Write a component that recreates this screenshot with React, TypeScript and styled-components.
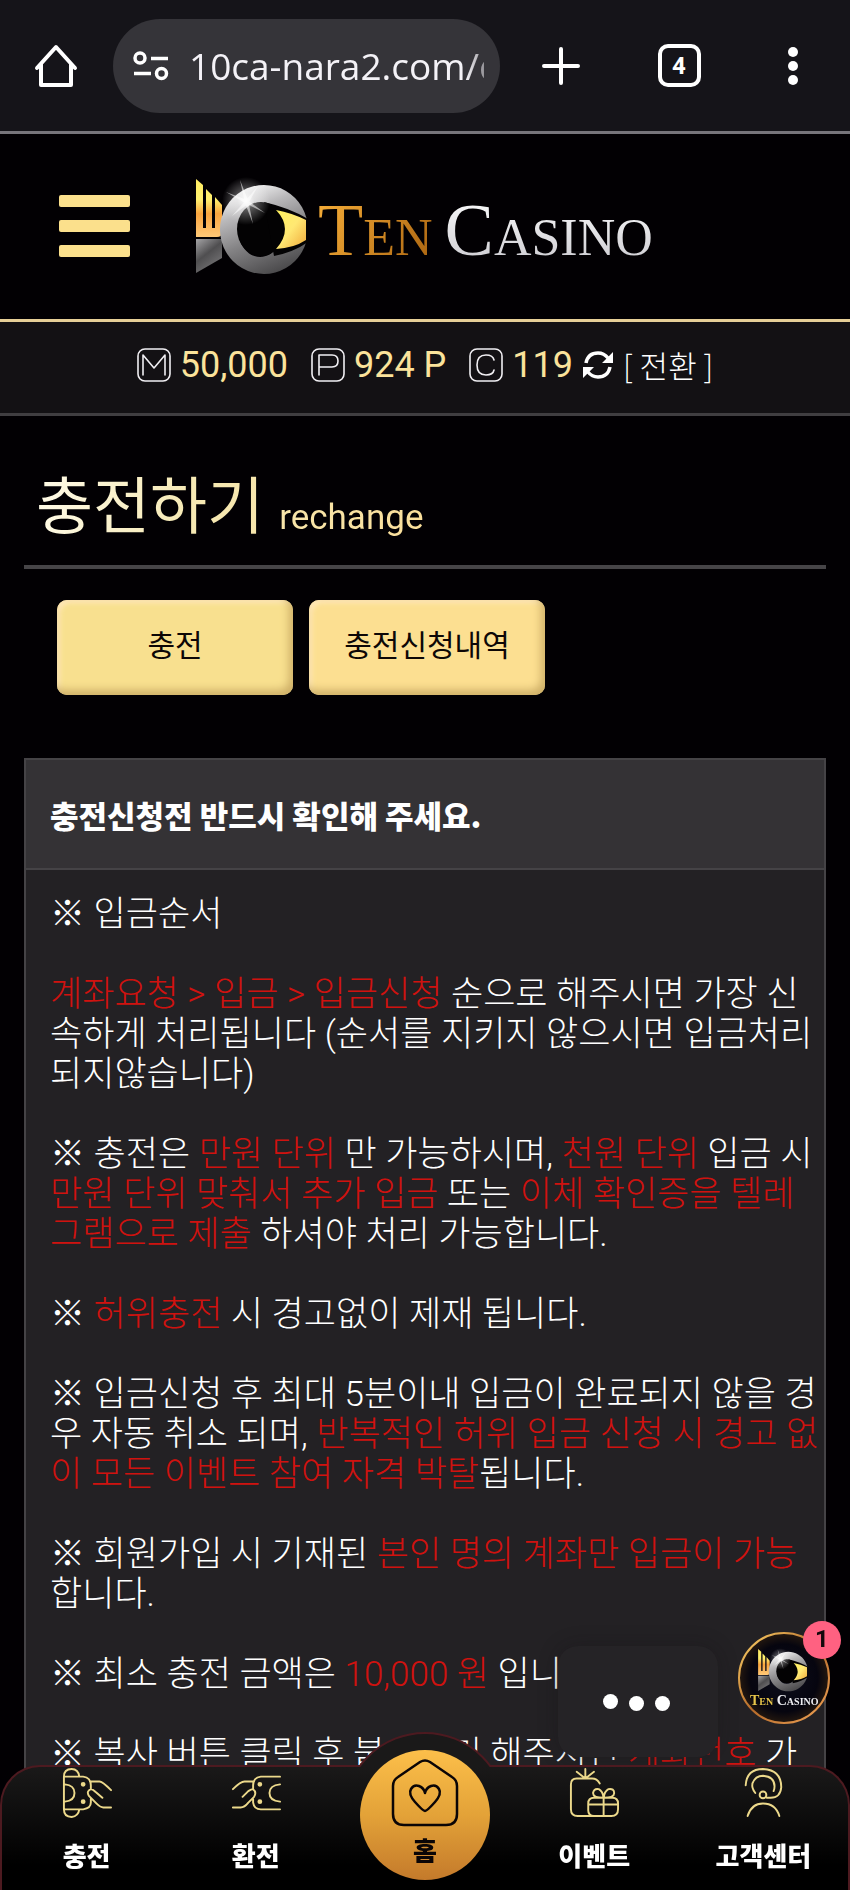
import React from "react";
import styled, { createGlobalStyle, css } from "styled-components";

const Global = createGlobalStyle`
  *, *::before, *::after { box-sizing: border-box; }
  html, body { margin: 0; background: #020003; }
  body {
    font-family: Roboto, "Noto Sans CJK KR", sans-serif;
    color: #fff;
  }
  button, input { font: inherit; color: inherit; }
  button { border: 0; padding: 0; background: none; cursor: pointer; }
  a { color: inherit; text-decoration: none; }
  svg { display: block; }
`;

const korean = css`
  font-family: "Noto Sans CJK KR", sans-serif;
`;

const goldText = css`
  background: linear-gradient(100deg, #fffbe9 0%, #f6e9b4 40%, #fbdf9a 100%);
  background-clip: text;
  -webkit-background-clip: text;
  color: transparent;
`;

const Shell = styled.div`
  height: 100vh;
  display: flex;
  flex-direction: column;
  overflow: hidden;
`;

const BrowserBar = styled.header`
  flex: none;
  height: 134px;
  display: flex;
  align-items: center;
  gap: 34px;
  padding: 0 52px 0 33px;
  background: #151419;
  border-bottom: 3px solid #77757b;
`;

const AddressPill = styled.label`
  flex: 0 1 387px;
  min-width: 0;
  height: 94px;
  display: flex;
  align-items: center;
  gap: 20px;
  padding: 0 16px 0 20px;
  border-radius: 47px;
  background: #353439;
`;

const AddressInput = styled.input`
  flex: 1;
  min-width: 0;
  height: 60px;
  padding: 0;
  border: 0;
  outline: 0;
  background: none;
  font-family: "Open Sans", Roboto, sans-serif;
  font-size: 37px;
  color: #f4f2f7;
  mask-image: linear-gradient(90deg, #000 94%, transparent 106%);
`;

const BrowserActions = styled.div`
  flex: 1;
  display: flex;
  align-items: center;
  justify-content: space-between;
  padding-left: 8px;
`;

const IconButton = styled.button`
  flex: none;
  display: flex;
  align-items: center;
  justify-content: center;
`;

const TabCount = styled.button`
  width: 43px;
  height: 43px;
  margin-right: 10px;
  border: 4px solid #fff;
  border-radius: 10px;
  font-weight: 700;
  font-size: 24px;
  line-height: 34px;
`;

const SiteHeader = styled.div`
  flex: none;
  height: 188px;
  display: flex;
  align-items: center;
  gap: 66px;
  padding: 0 59px 2px;
  border-bottom: 3px solid #e6cf97;
`;

const MenuButton = styled.button`
  width: 71px;
  display: flex;
  flex-direction: column;
  gap: 13px;
`;

const MenuBar = styled.span`
  height: 12px;
  border-radius: 2px;
  background: #fbe08c;
`;

const Brand = styled.a`
  display: flex;
  align-items: center;
  gap: 10px;
`;

const BrandText = styled.span`
  display: flex;
  gap: 12px;
  padding-top: 8px;
`;

const BrandWord = styled.span<{ $from: string; $to: string; $angle: string }>`
  font-family: "Liberation Serif", serif;
  font-variant: small-caps;
  font-size: 74px;
  line-height: 80px;
  background: linear-gradient(${(p) => p.$angle}, ${(p) => p.$from}, ${(p) => p.$to});
  background-clip: text;
  -webkit-background-clip: text;
  color: transparent;
`;

const BalanceBar = styled.div`
  flex: none;
  height: 94px;
  display: flex;
  align-items: center;
  justify-content: center;
  gap: 10px;
  padding-bottom: 6px;
  background: #131114;
  border-bottom: 3px solid #403e41;
`;

const Balance = styled.span`
  display: flex;
  align-items: center;
  gap: 9px;
  margin-right: 13px;
  font-size: 36px;
  line-height: 42px;
  color: #fbe39b;

  &:last-of-type { margin-right: 0; }
`;

const ConvertButton = styled.button`
  ${korean}
  font-weight: 300;
  font-size: 31px;
  line-height: 42px;
`;

const Page = styled.main`
  flex: 1;
  min-height: 0;
  display: flex;
  flex-direction: column;
  padding: 0 24px;
`;

const TitleRow = styled.div`
  flex: none;
  height: 153px;
  display: flex;
  align-items: flex-end;
  padding: 0 12px 7px;
  border-bottom: 4px solid #464447;
`;

const Title = styled.h1`
  ${korean}
  ${goldText}
  display: flex;
  align-items: baseline;
  gap: 15px;
  margin: 0;
  font-weight: 400;
  font-size: 62px;
  line-height: 80px;
`;

const Subtitle = styled.small`
  font-family: Roboto, sans-serif;
  font-size: 35px;
`;

const Tabs = styled.div`
  flex: none;
  display: flex;
  gap: 16px;
  padding: 31px 33px 63px;
`;

const TabButton = styled.button<{ $tone: string }>`
  ${korean}
  width: 236px;
  height: 95px;
  padding-bottom: 10px;
  border-radius: 10px;
  background: ${(p) => p.$tone};
  box-shadow: inset -4px -5px 8px #cfb068, inset 3px 3px 5px #ffe9bb;
  font-size: 30px;
  color: #0d0706;
`;

const Panel = styled.section`
  flex: 1;
  min-height: 0;
  overflow: hidden;
  border: 2px solid #454346;
  background: #232124;
`;

const PanelTitle = styled.h2`
  ${korean}
  margin: 0;
  padding: 33px 24px 31px;
  border-bottom: 2px solid #454346;
  background: #343235;
  font-weight: 900;
  font-size: 31px;
  line-height: 44px;
`;

const Notice = styled.div`
  display: flex;
  flex-direction: column;
  gap: 40px;
  padding: 25px 0 40px 24px;
  font-weight: 300;
  font-size: 35px;
  line-height: 40px;
`;

const Paragraph = styled.p`
  margin: 0;
`;

const Red = styled.span`
  color: #d0120f;
`;

const BottomNav = styled.nav`
  position: fixed;
  left: 0;
  right: 0;
  bottom: 0;
  height: 125px;
  display: grid;
  grid-template-columns: repeat(5, 1fr);
  border: 2px solid #4d1a20;
  border-bottom: 0;
  border-radius: 40px 40px 0 0;
  background: linear-gradient(#1a1919, #000 80%);
`;

const NavItem = styled.a`
  ${korean}
  display: flex;
  flex-direction: column;
  align-items: center;
  gap: 18px;
  padding-top: 1px;
  font-weight: 900;
  font-size: 26px;
  line-height: 38px;
`;

const HomeSlot = styled.div`
  position: relative;
`;

const HomeBump = styled.span`
  position: absolute;
  left: 50%;
  top: -35px;
  width: 164px;
  height: 35px;
  transform: translateX(-50%);
  overflow: hidden;

  &::before {
    content: "";
    position: absolute;
    inset: 0 0 auto 0;
    height: 164px;
    border: 2px solid #4d1a20;
    border-radius: 50%;
    background: #1a1919;
  }
`;

const HomeLink = styled.a`
  ${korean}
  position: absolute;
  left: 50%;
  top: -17px;
  width: 130px;
  height: 130px;
  transform: translateX(-50%);
  display: flex;
  flex-direction: column;
  align-items: center;
  gap: 4px;
  padding-top: 9px;
  border-radius: 50%;
  background: linear-gradient(#fcbf4a, #e3a238 50%, #c47a2b);
  font-weight: 900;
  font-size: 26px;
  line-height: 38px;
  color: #0b0506;
`;

const Typing = styled.div`
  position: fixed;
  right: 132px;
  bottom: 133px;
  width: 160px;
  height: 111px;
  display: flex;
  align-items: center;
  justify-content: center;
  gap: 11px;
  padding-right: 4px;
  border-radius: 20px;
  background: #252326;
  box-shadow: 0 0 20px rgba(20, 18, 20, 0.3);
`;

const Dot = styled.span<{ $raised?: boolean }>`
  width: 15px;
  height: 15px;
  border-radius: 50%;
  background: #fff;
  margin-top: ${(p) => (p.$raised ? "0" : "4px")};
`;

const ChatButton = styled.button`
  position: fixed;
  right: 20px;
  bottom: 166px;
  width: 92px;
  height: 92px;
`;

const Badge = styled.span`
  position: absolute;
  top: -11px;
  right: -11px;
  width: 38px;
  height: 38px;
  border-radius: 50%;
  background: #ff6181;
  font-weight: 700;
  font-size: 24px;
  line-height: 36px;
  text-align: center;
  color: #12080b;
`;

const Letter: React.FC<{ d: string; name: string }> = ({ d, name }) => (
  <svg width="34" height="34" viewBox="0 0 34 34" fill="none" stroke="#f1eff3" strokeWidth="1.6" role="img" aria-label={name}>
    <rect x="1" y="1" width="32" height="32" rx="7" />
    <path d={d} strokeLinejoin="round" strokeLinecap="round" />
  </svg>
);

const FishMark: React.FC<{ id: string; width: number; height: number }> = ({ id, width, height }) => (
  <svg width={width} height={height} viewBox="0 0 112 108" aria-hidden="true">
    <defs>
      <linearGradient id={`${id}ring`} x1="0.2" y1="0" x2="0.6" y2="1">
        <stop offset="0" stopColor="#ffffff" />
        <stop offset="0.3" stopColor="#b9b8ba" />
        <stop offset="0.6" stopColor="#858486" />
        <stop offset="1" stopColor="#4b4a4c" />
      </linearGradient>
      <linearGradient id={`${id}fin`} x1="0" y1="0" x2="0" y2="1">
        <stop offset="0" stopColor="#ffec62" />
        <stop offset="0.35" stopColor="#fff06e" />
        <stop offset="0.6" stopColor="#f9a43f" />
        <stop offset="1" stopColor="#ffc877" />
      </linearGradient>
      <linearGradient id={`${id}tail`} x1="0" y1="0" x2="0.6" y2="1">
        <stop offset="0" stopColor="#a5a4a6" />
        <stop offset="0.5" stopColor="#4f4e50" />
        <stop offset="1" stopColor="#777678" />
      </linearGradient>
      <linearGradient id={`${id}eye`} x1="0" y1="0" x2="1" y2="1">
        <stop offset="0" stopColor="#fff25e" />
        <stop offset="0.5" stopColor="#ffe873" />
        <stop offset="1" stopColor="#f0a93a" />
      </linearGradient>
      <radialGradient id={`${id}glow`}>
        <stop offset="0" stopColor="#fff" stopOpacity="0.95" />
        <stop offset="0.35" stopColor="#fff" stopOpacity="0.35" />
        <stop offset="1" stopColor="#fff" stopOpacity="0" />
      </radialGradient>
    </defs>
    <path d="M0 7 L7 13 V56 H10 V17 L16 23 V56 H19 V25 L26 33 V60 Q26 65 21 65 H0Z" fill={`url(#${id}fin)`} />
    <path d="M0 67 H26 V86 L0 101Z" fill={`url(#${id}tail)`} />
    <path fillRule="evenodd" d="M68 13 a44 44.5 0 1 1 -.1 0Z M64 31 a22 27 0 1 0 .1 0Z" fill={`url(#${id}ring)`} />
    <ellipse cx="65" cy="57" rx="24" ry="27" fill="#030203" />
    <path d="M68 30 Q94 36 112 47 V70 Q98 80 78 84Z" fill="#030203" />
    <path d="M80 38 Q96 41 110 48 V68 Q98 76 80 77 Q98 57 80 38Z" fill={`url(#${id}eye)`} />
    <circle cx="50" cy="29" r="24" fill={`url(#${id}glow)`} />
    <path d="M44 8 L52 28 L57 52 L49 31Z M30 20 L51 28 L69 41 L49 31Z M36 44 L50 28 L62 14 L52 32Z" fill="#fff" opacity="0.55" />
  </svg>
);

const lineIcon = {
  width: 50,
  height: 50,
  viewBox: "0 0 52 52",
  fill: "none",
  stroke: "#ecd98b",
  strokeWidth: 2,
  strokeLinecap: "round" as const,
  strokeLinejoin: "round" as const,
  "aria-hidden": true,
};

const DepositIcon = () => (
  <svg {...lineIcon}>
    <path d="M2 9 Q2 1 10 1 Q17 1 18 9 M2 9 V43 Q2 51 10 51 Q17 50 18 43 M2 9 M3 9 H22 Q30 10 30 18 V22 M3 43 H22 Q30 42 30 36 V32 M29 14 H39 Q42 14 51 23 M51 41 H43 Q40 41 36 37 L28 29 Q25 24 30 22 Q32 22 35 25 L42 31 M3 17 Q13 18 13 26 Q13 34 3 35" />
    <circle cx="22" cy="17" r="1.500" fill="#ecd98b" />
    <circle cx="22" cy="35" r="1.500" fill="#ecd98b" />
  </svg>
);

const WithdrawIcon = () => (
  <svg {...lineIcon}>
    <path d="M51 9 H31 Q23 10 23 18 V22 M23 32 V36 Q24 43 31 43 H51 M24 14 H14 Q10 14 2 22 M2 41 H10 Q14 41 18 36 L24 30 Q27 25 23 22 Q21 22 18 24 L12 30 M51 17 Q40 18 40 26 Q40 34 51 35" />
    <circle cx="30" cy="17" r="1.500" fill="#ecd98b" />
    <circle cx="30" cy="35" r="1.500" fill="#ecd98b" />
  </svg>
);

const EventIcon = () => (
  <svg {...lineIcon}>
    <path d="M17 1 V11 M8 4 L17 11 L26 4 M32 16 Q29 11 24 11 H8 Q2 11 2 17 V43 Q2 50 9 50 H44 Q51 50 51 43 V37 Q51 31 45 31 H26 Q20 31 20 37 V44 Q20 50 26 50 M20 38 H51 M36 31 V50 M36 31 Q25 31 25 26 Q26 21 31 22 Q35 24 36 31 Q37 24 41 22 Q47 21 47 26 Q47 31 36 31" />
  </svg>
);

const SupportIcon = () => (
  <svg {...lineIcon}>
    <path d="M8 18 Q9 1 26 1 Q45 2 45 20 Q44 31 34 31 H30 M18 26 Q14 21 15 16 Q18 8 26 8 Q38 9 38 19 Q38 22 37 24 M10 50 Q14 37 26 37 Q39 37 43 50" />
    <circle cx="26" cy="28" r="3.500" />
  </svg>
);

const App: React.FC = () => (
  <Shell>
    <Global />
    <BrowserBar>
      <IconButton aria-label="Home">
        <svg width="46" height="46" viewBox="0 0 46 46" fill="none" stroke="#fff" strokeWidth="4">
          <path d="M4 25 L23 4 L42 25 M8 21 V42 H38 V21" strokeLinejoin="round" strokeLinecap="round" />
        </svg>
      </IconButton>
      <AddressPill>
        <svg width="36" height="30" viewBox="0 0 36 30" fill="none" stroke="#fff" strokeWidth="3.500" aria-hidden="true">
          <circle cx="7" cy="7" r="5" />
          <path d="M18 7.500 H35 M1 22.500 H18" />
          <circle cx="28.500" cy="22.500" r="5" />
        </svg>
        <AddressInput aria-label="Address" defaultValue="10ca-nara2.com/ch" />
      </AddressPill>
      <BrowserActions>
        <IconButton aria-label="New tab">
          <svg width="38" height="38" viewBox="0 0 38 38" stroke="#fff" strokeWidth="4" strokeLinecap="round">
            <path d="M19 2 V36 M2 19 H36" />
          </svg>
        </IconButton>
        <TabCount aria-label="4 tabs">4</TabCount>
        <IconButton aria-label="Menu">
          <svg width="10" height="38" viewBox="0 0 10 38" fill="#fff">
            <circle cx="5" cy="5" r="5" />
            <circle cx="5" cy="19" r="5" />
            <circle cx="5" cy="33" r="5" />
          </svg>
        </IconButton>
      </BrowserActions>
    </BrowserBar>

    <SiteHeader>
      <MenuButton aria-label="Open menu">
        <MenuBar />
        <MenuBar />
        <MenuBar />
      </MenuButton>
      <Brand href="#home">
        <FishMark id="top" width={112} height={108} />
        <BrandText>
          <BrandWord $angle="120deg" $from="#f9b03a" $to="#a8620f">Ten</BrandWord>
          <BrandWord $angle="180deg" $from="#ffffff" $to="#c9c8ce">Casino</BrandWord>
        </BrandText>
      </Brand>
    </SiteHeader>

    <BalanceBar>
      <Balance>
        <Letter name="M" d="M6 27 V7 L17 20 L28 7 V27" />
        50,000
      </Balance>
      <Balance>
        <Letter name="P" d="M8 27 V7 H21 Q27 7 27 13 Q27 19 21 19 H8" />
        924 P
      </Balance>
      <Balance>
        <Letter name="C" d="M25 12 Q24 7 17 7 Q8 7 8 17 Q8 27 17 27 Q24 27 25 22" />
        119
      </Balance>
      <IconButton aria-label="Refresh">
        <svg width="30" height="30" viewBox="0 0 30 30" fill="none" stroke="#fff" strokeWidth="3.500">
          <path d="M3 13 Q5 3 15 3 Q21 3 25 8 M27 17 Q25 27 15 27 Q9 27 5 22" />
          <path d="M30 2 V13 H19Z M0 28 V17 H11Z" fill="#fff" stroke="none" />
        </svg>
      </IconButton>
      <ConvertButton>[ 전환 ]</ConvertButton>
    </BalanceBar>

    <Page>
      <TitleRow>
        <Title>
          충전하기 <Subtitle>rechange</Subtitle>
        </Title>
      </TitleRow>
      <Tabs>
        <TabButton $tone="#f8e08f">충전</TabButton>
        <TabButton $tone="#fcdf91">충전신청내역</TabButton>
      </Tabs>
      <Panel>
        <PanelTitle>충전신청전 반드시 확인해 주세요.</PanelTitle>
        <Notice>
          <Paragraph>※ 입금순서</Paragraph>
          <Paragraph>
            <Red>계좌요청 &gt; 입금 &gt; 입금신청</Red> 순으로 해주시면 가장 신속하게 처리됩니다 (순서를 지키지 않으시면 입금처리되지않습니다)
          </Paragraph>
          <Paragraph>
            ※ 충전은 <Red>만원 단위</Red> 만 가능하시며, <Red>천원 단위</Red> 입금 시 <Red>만원 단위 맞춰서 추가 입금</Red> 또는 <Red>이체 확인증을 텔레그램으로 제출</Red> 하셔야 처리 가능합니다.
          </Paragraph>
          <Paragraph>
            ※ <Red>허위충전</Red> 시 경고없이 제재 됩니다.
          </Paragraph>
          <Paragraph>
            ※ 입금신청 후 최대 5분이내 입금이 완료되지 않을 경우 자동 취소 되며, <Red>반복적인 허위 입금 신청 시 경고 없이 모든 이벤트 참여 자격 박탈</Red>됩니다.
          </Paragraph>
          <Paragraph>
            ※ 회원가입 시 기재된 <Red>본인 명의 계좌만 입금이 가능</Red>합니다.
          </Paragraph>
          <Paragraph>
            ※ 최소 충전 금액은 <Red>10,000 원</Red> 입니다.
          </Paragraph>
          <Paragraph>
            ※ 복사 버튼 클릭 후 붙여넣기 해주시면 <Red>계좌번호</Red> 가
          </Paragraph>
        </Notice>
      </Panel>
    </Page>

    <Typing role="status" aria-label="Typing">
      <Dot $raised />
      <Dot />
      <Dot />
    </Typing>

    <ChatButton aria-label="Chat, 1 new message">
      <svg width="92" height="92" viewBox="0 0 92 92">
        <defs>
          <radialGradient id="disc">
            <stop offset="0" stopColor="#0d0e1c" />
            <stop offset="0.75" stopColor="#06050f" />
            <stop offset="1" stopColor="#24180f" />
          </radialGradient>
          <linearGradient id="rim" x1="0" y1="0" x2="1" y2="1">
            <stop offset="0" stopColor="#ffd56a" />
            <stop offset="0.5" stopColor="#b56a2a" />
            <stop offset="1" stopColor="#f2a557" />
          </linearGradient>
        </defs>
        <circle cx="46" cy="46" r="45" fill="url(#disc)" stroke="url(#rim)" strokeWidth="2" />
        <svg x="18" y="14" width="54" height="48">
          <FishMark id="chat" width={54} height={48} />
        </svg>
        <text x="12" y="73" fontFamily="Liberation Serif, serif" fontWeight="700" fontSize="14" style={{ fontVariant: "small-caps" }}>
          <tspan fill="#e8c64a">Ten </tspan>
          <tspan fill="#eeeef2">Casino</tspan>
        </text>
      </svg>
      <Badge>1</Badge>
    </ChatButton>

    <BottomNav>
      <NavItem href="#deposit"><DepositIcon />충전</NavItem>
      <NavItem href="#withdraw"><WithdrawIcon />환전</NavItem>
      <HomeSlot>
        <HomeBump />
        <HomeLink href="#home">
          <svg width="68" height="68" viewBox="0 0 68 68" fill="none" stroke="#0b0506" strokeWidth="2.500" strokeLinejoin="round" aria-hidden="true">
            <path d="M29 3 Q34 0 39 3 L61 18 Q66 21 66 27 V55 Q66 66 55 66 H13 Q2 66 2 55 V27 Q2 21 7 18Z" />
            <path d="M34 52 Q32 52 24 43 Q17 35 20 30 Q23 25 28 27 Q33 29 34 34 Q35 29 40 27 Q45 25 48 30 Q51 35 44 43 Q36 52 34 52Z" />
          </svg>
          홈
        </HomeLink>
      </HomeSlot>
      <NavItem href="#event"><EventIcon />이벤트</NavItem>
      <NavItem href="#support"><SupportIcon />고객센터</NavItem>
    </BottomNav>
  </Shell>
);

export default App;
